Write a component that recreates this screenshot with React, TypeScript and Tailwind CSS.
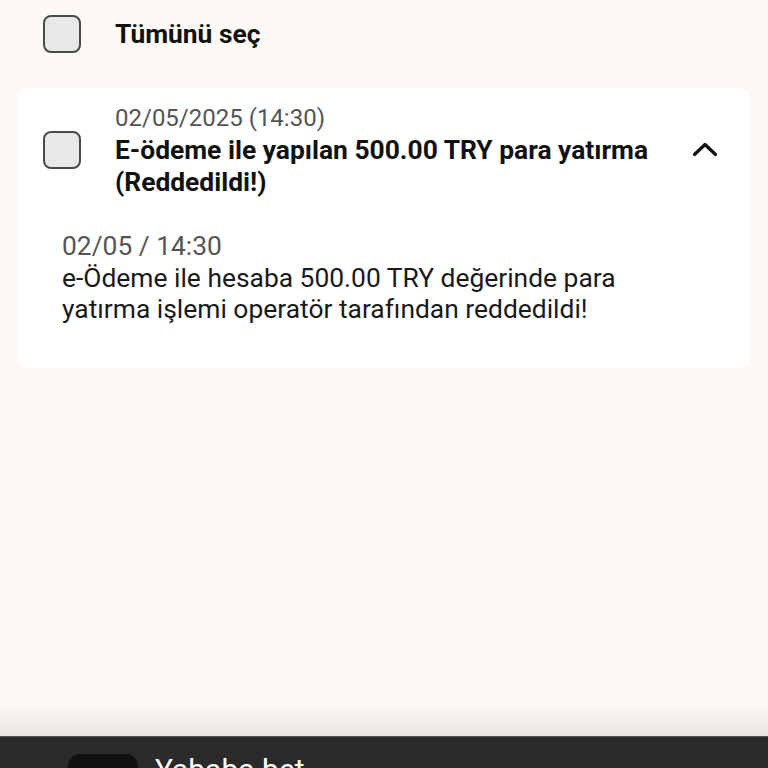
import React from "react";

const font = { fontFamily: "Roboto, 'Noto Sans', 'Liberation Sans', sans-serif" };

function Box() {
  return (
    <div className="w-[38px] h-[38px] shrink-0 rounded-[8px] border-2 border-[#4a4a4a] bg-[#e8e8e7]" />
  );
}

export default function App() {
  return (
    <div style={font} className="h-[768px] w-[768px] bg-[#fdfaf5] flex flex-col overflow-hidden">
      <div className="flex items-center pl-[43px] pt-[15px] h-[53px] gap-[34px]">
        <Box />
        <span className="text-[26.4px] font-bold text-[#111] leading-[32px]">Tümünü seç</span>
      </div>

      <div className="mt-[35px] ml-[17px] mr-[18px] bg-white rounded-[14px] pt-[14px] pb-[43px]">
        <div className="flex items-center pl-[26px] pr-[32px]">
          <Box />
          <div className="ml-[34px] flex-1">
            <div className="text-[24px] leading-[32px] text-[#555]">02/05/2025 (14:30)</div>
            <div className="text-[26.4px] leading-[32px] font-bold text-[#111]">
              E-ödeme ile yapılan 500.00 TRY para yatırma
              <br />
              (Reddedildi!)
            </div>
          </div>
          <svg width="26" height="16" viewBox="0 0 26 16" className="shrink-0 mb-[2px]">
            <path d="M2.5 13.5 L13 3.5 L23.5 13.5" fill="none" stroke="#111" strokeWidth="3.2" strokeLinecap="round" strokeLinejoin="round" />
          </svg>
        </div>
        <div className="pl-[45px] pr-[30px] mt-[32px]">
          <div className="text-[26.4px] leading-[32px] text-[#555]">02/05 / 14:30</div>
          <div className="text-[26.4px] leading-[31px] text-[#1a1a1a] mt-[1px]">
            e-Ödeme ile hesaba 500.00 TRY değerinde para
            <br />
            yatırma işlemi operatör tarafından reddedildi!
          </div>
        </div>
      </div>

      <div className="flex-1" />
      <div className="h-[32px] bg-gradient-to-b from-[#fdfaf5] to-[#e9e6e1]" />
      <div className="h-[32px] bg-[#2a2a2a] border-t border-[#555] flex items-start pl-[68px] pt-[17px] gap-[17px] overflow-hidden">
        <div className="w-[70px] h-[50px] rounded-[12px] bg-[#111] shrink-0" />
        <span className="text-[30px] leading-[30px] text-white mt-[1px]">Yababa bet</span>
      </div>
    </div>
  );
}
